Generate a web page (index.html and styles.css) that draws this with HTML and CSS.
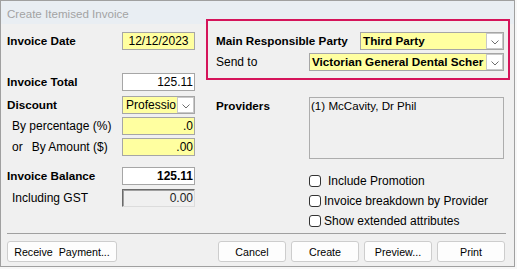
FILE: index.html
```html
<!DOCTYPE html>
<html>
<head>
<meta charset="utf-8">
<link rel="stylesheet" href="styles.css">
</head>
<body>
<div class="window">
  <div class="titlebar">Create Itemised Invoice</div>
  <div class="main">
    <div class="left">
      <div class="row">
        <span class="lbl b">Invoice Date</span>
        <div class="field yellow center">12/12/2023</div>
      </div>
      <div class="row total">
        <span class="lbl b">Invoice Total</span>
        <div class="field white right">125.11</div>
      </div>
      <div class="row disc">
        <span class="lbl b">Discount</span>
        <div class="combo small yellow">
          <span class="ctext">Professio</span>
          <span class="dd"><svg width="8" height="5" viewBox="0 0 8 5"><path d="M0.5 0.5 L4 4 L7.5 0.5" fill="none" stroke="#6e6e6e" stroke-width="1"/></svg></span>
        </div>
      </div>
      <div class="row pct">
        <span class="lbl ind">By percentage (%)</span>
        <div class="field yellow right">.0</div>
      </div>
      <div class="row amt">
        <span class="lbl ind"><span class="or">or</span>By Amount ($)</span>
        <div class="field yellow right">.00</div>
      </div>
      <div class="row bal">
        <span class="lbl b">Invoice Balance</span>
        <div class="field white right b">125.11</div>
      </div>
      <div class="row gst">
        <span class="lbl ind">Including GST</span>
        <div class="field inset right">0.00</div>
      </div>
    </div>
    <div class="right">
      <div class="highlight">
        <div class="hrow">
          <span class="lbl b">Main Responsible Party</span>
          <div class="combo party yellow">
            <span class="ctext b">Third Party</span>
            <span class="dd"><svg width="8" height="5" viewBox="0 0 8 5"><path d="M0.5 0.5 L4 4 L7.5 0.5" fill="none" stroke="#6e6e6e" stroke-width="1"/></svg></span>
          </div>
        </div>
        <div class="hrow second">
          <span class="lbl">Send to</span>
          <div class="combo sendto yellow">
            <span class="ctext b">Victorian General Dental Scher</span>
            <span class="dd"><svg width="8" height="5" viewBox="0 0 8 5"><path d="M0.5 0.5 L4 4 L7.5 0.5" fill="none" stroke="#6e6e6e" stroke-width="1"/></svg></span>
          </div>
        </div>
      </div>
      <div class="prov">
        <span class="plbl b">Providers</span>
        <div class="list">(1) McCavity, Dr Phil</div>
      </div>
      <div class="checks">
        <div class="check first"><span class="box"></span><span>Include Promotion</span></div>
        <div class="check"><span class="box"></span><span>Invoice breakdown by Provider</span></div>
        <div class="check"><span class="box"></span><span>Show extended attributes</span></div>
      </div>
    </div>
  </div>
  <div class="sep"></div>
  <div class="buttons">
    <button class="btn wide">Receive&nbsp; Payment...</button>
    <div class="spacer"></div>
    <button class="btn">Cancel</button>
    <button class="btn">Create</button>
    <button class="btn">Preview...</button>
    <button class="btn">Print</button>
  </div>
</div>
</body>
</html>
```
FILE: styles.css
```css
* { box-sizing: border-box; }
body {
  margin: 0;
  background: #f7f7f7;
  font-family: "Liberation Sans", Arial, sans-serif;
  font-size: 12px;
  line-height: 14px;
  color: #000;
}
.window {
  width: 515px;
  height: 267px;
  border: 1px solid #a0a0a0;
  background: #f0f0f0;
  display: flex;
  flex-direction: column;
}
.titlebar {
  flex: none;
  height: 23px;
  padding: 2px 0 0 6px;
  line-height: 21px;
  background: #e9eef3;
  color: #a3a3a3;
  font-size: 11.6px;
}
.main {
  flex: none;
  height: 209px;
  display: flex;
  gap: 11px;
  padding: 0 4px 0 6px;
}
.b { font-weight: bold; }
.lbl.b, .plbl.b, .ctext.b { font-size: 11.7px; }
.left {
  width: 188px;
  padding-top: 8px;
  display: flex;
  flex-direction: column;
}
.row {
  display: flex;
  align-items: center;
  justify-content: space-between;
  height: 18px;
}
.row.total { margin-top: 23px; }
.row.disc { margin-top: 5px; }
.row.pct { margin-top: 3px; }
.row.amt { margin-top: 3px; }
.row.bal { margin-top: 11px; }
.row.gst { margin-top: 4px; }
.lbl.ind { padding-left: 5px; }
.or { margin-right: 9px; }
.field {
  width: 73px;
  height: 18px;
  border: 1px solid #a6a6a6;
  line-height: 16px;
  white-space: nowrap;
  overflow: hidden;
}
.yellow { background: #ffffa0; }
.white { background: #fff; }
.center { text-align: center; }
.right { text-align: right; padding-right: 1px; }
.field.inset {
  background: #f0f0f0;
  border-top: 1px solid #6a6a6a;
  border-left: 1px solid #6a6a6a;
  border-right: 1px solid #dcdcdc;
  border-bottom: 1px solid #dcdcdc;
  box-shadow: inset 1px 1px 0 #a0a0a0;
  color: #222;
}
.combo {
  height: 18px;
  border: 1px solid #a6a6a6;
  display: flex;
  align-items: stretch;
  overflow: hidden;
}
.combo.small { width: 73px; }
.combo.party { width: 144px; }
.combo.sendto { width: 195px; }
.ctext {
  flex: 1;
  min-width: 0;
  overflow: hidden;
  white-space: nowrap;
  line-height: 16px;
  padding-left: 2px;
}
.combo.small .ctext { padding-left: 3px; }
.dd {
  flex: none;
  width: 17px;
  background: #fff;
  border: 1px solid #c9c9c9;
  display: flex;
  align-items: center;
  justify-content: center;
  padding-top: 2px;
}
.main > .right {
  width: 304px;
  display: flex;
  flex-direction: column;
  text-align: left;
  padding-right: 0;
}
.highlight {
  margin-top: -5px;
  height: 61px;
  border: 2px solid #d5145a;
  background: #f0f0f0;
  padding: 11px 4px 0 8px;
}
.hrow {
  display: flex;
  align-items: center;
  justify-content: space-between;
  height: 18px;
}
.hrow.second { margin-top: 3px; }
.prov {
  display: flex;
  margin-top: 17px;
}
.plbl {
  width: 103px;
  padding: 2px 0 0 10px;
}
.list {
  width: 195px;
  height: 62px;
  border: 1px solid #adadad;
  padding: 1px 0 0 1px;
  font-size: 11.6px;
}
.checks {
  margin-left: 103px;
  margin-top: 15px;
}
.check {
  display: flex;
  align-items: center;
  height: 14px;
}
.check + .check { margin-top: 6px; }
.box {
  width: 12px;
  height: 12px;
  border: 1px solid #333;
  border-radius: 3px;
  background: #fff;
  margin-right: 3px;
}
.check.first .box { margin-right: 7px; }
.sep {
  flex: none;
  height: 1px;
  background: #a0a0a0;
  margin: 0 8px 0 6px;
}
.buttons {
  flex: none;
  display: flex;
  gap: 5px;
  margin-top: 7px;
  padding: 0 9px 0 6px;
  height: 21px;
}
.spacer { flex: 1; }
.btn {
  width: 68px;
  height: 21px;
  border: 1px solid #cdcdcd;
  border-radius: 3px;
  background: #fdfdfd;
  font-family: "Liberation Sans", Arial, sans-serif;
  font-size: 10.7px;
  color: #000;
  padding: 0;
}
.btn.wide { width: 110px; }
```
